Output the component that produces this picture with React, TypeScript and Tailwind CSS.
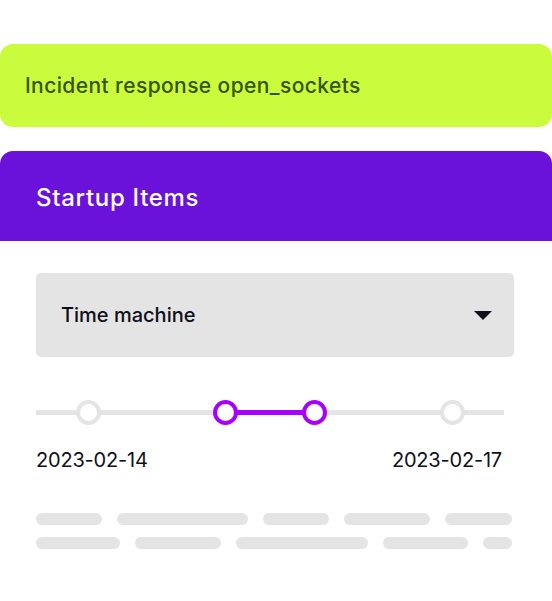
import React from "react";

const row1 = [66, 131, 66, 86, 67];
const row2 = [84, 86, 132, 85, 29];

export default function App() {
  return (
    <div
      className="w-[552px] h-[601px] bg-white overflow-hidden"
      style={{ fontFamily: "Inter, 'Noto Sans', sans-serif" }}
    >
      <div className="pt-[44px]">
        <div className="h-[83px] rounded-[13px] bg-[#cbfb3d] flex items-center pl-[25px]">
          <span className="text-[21px] text-[#355400] font-medium tracking-[0.4px]">
            Incident response open_sockets
          </span>
        </div>
      </div>
      <div className="mt-[24px]">
        <div className="h-[90px] rounded-t-[13px] bg-[#6a12da] flex items-center pl-[36px] pt-[3px]">
          <span className="text-[24px] text-white font-medium tracking-[0.7px]">Startup Items</span>
        </div>
        <div className="pl-[36px] pt-[32px]">
          <div className="w-[478px] h-[84px] rounded-[5px] bg-[#e4e4e4] flex items-center justify-between pl-[25px] pr-[22px]">
            <span className="text-[20px] text-[#0f0f1a] font-medium tracking-[0px]">Time machine</span>
            <svg width="18" height="9" viewBox="0 0 18 9">
              <path d="M0 0 H18 L9 9 Z" fill="#0f0f1a" />
            </svg>
          </div>
          <div className="relative w-[468px] h-[26px] mt-[43px]">
            <div className="absolute left-0 right-0 top-[10px] h-[5px] bg-[#e4e4e4]" />
            <div className="absolute left-[189px] w-[89px] top-[10px] h-[5px] bg-[#a600ff]" />
            <div className="absolute left-[40px] top-0 w-[25px] h-[25px] rounded-full border-[4px] border-[#e4e4e4] bg-white" />
            <div className="absolute left-[177px] top-0 w-[25px] h-[25px] rounded-full border-[4px] border-[#a600ff] bg-white" />
            <div className="absolute left-[266px] top-0 w-[25px] h-[25px] rounded-full border-[4px] border-[#a600ff] bg-white" />
            <div className="absolute left-[404px] top-0 w-[25px] h-[25px] rounded-full border-[4px] border-[#e4e4e4] bg-white" />
          </div>
          <div className="w-[466px] flex justify-between mt-[24px] text-[20px] text-[#0f0f1a] tracking-[-0.2px] leading-none">
            <span>2023-02-14</span>
            <span>2023-02-17</span>
          </div>
          <div className="mt-[43px] flex flex-col gap-[12px]">
            <div className="flex gap-[15px]">
              {row1.map((w, i) => (
                <div key={i} className="h-[12px] rounded-full bg-[#e4e4e4]" style={{ width: w }} />
              ))}
            </div>
            <div className="flex gap-[15px]">
              {row2.map((w, i) => (
                <div key={i} className="h-[12px] rounded-full bg-[#e4e4e4]" style={{ width: w }} />
              ))}
            </div>
          </div>
        </div>
      </div>
    </div>
  );
}
